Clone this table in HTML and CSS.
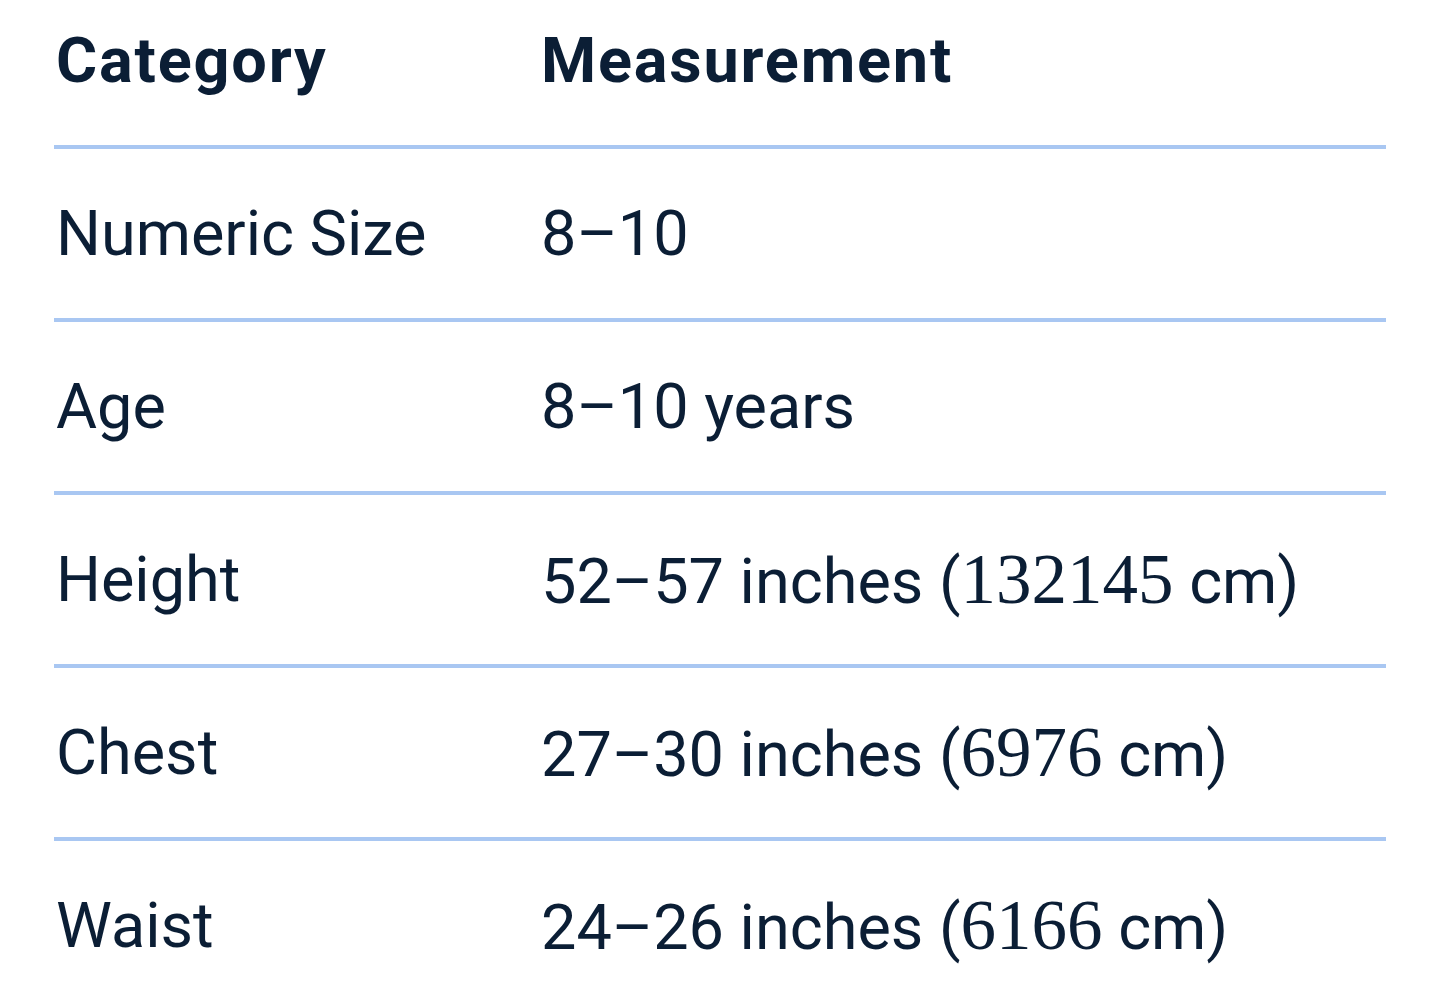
FILE: index.html
```html
<!DOCTYPE html>
<html lang="en">
<head>
  <meta charset="UTF-8">
  <title>Size Chart</title>
  <link rel="stylesheet" href="styles.css">
</head>
<body>
<table class="size-table">
  <thead>
    <tr>
      <th>Category</th>
      <th>Measurement</th>
    </tr>
  </thead>
  <tbody>
    <tr>
      <td>Numeric Size</td>
      <td>8–10</td>
    </tr>
    <tr>
      <td>Age</td>
      <td>8–10 years</td>
    </tr>
    <tr>
      <td>Height</td>
      <td>52–57 inches (<span class="num">132145</span> cm)</td>
    </tr>
    <tr>
      <td>Chest</td>
      <td>27–30 inches (<span class="num">6976</span> cm)</td>
    </tr>
    <tr>
      <td>Waist</td>
      <td>24–26 inches (<span class="num">6166</span> cm)</td>
    </tr>
  </tbody>
</table>
</body>
</html>
```
FILE: styles.css
```css
body { margin: 0; background: #fff; font-family: Roboto, "Open Sans", sans-serif; color: #0b1e35; overflow: hidden; }
.size-table { border-collapse: collapse; margin: -24px 0 0 54px; width: 1332px; }
.size-table th, .size-table td { height: 169px; padding: 0 0 0 2px; text-align: left; vertical-align: middle; font-size: 63px; line-height: 1; }
.size-table th { font-weight: 700; letter-spacing: 1.8px; }
.size-table th:first-child, .size-table td:first-child { width: 483px; }
.size-table tr { border-bottom: 4px solid #a9c7f2; }
.size-table tbody tr:last-child { border-bottom: none; }
.num { font-family: "Liberation Serif", serif; font-size: 71px; }
```
